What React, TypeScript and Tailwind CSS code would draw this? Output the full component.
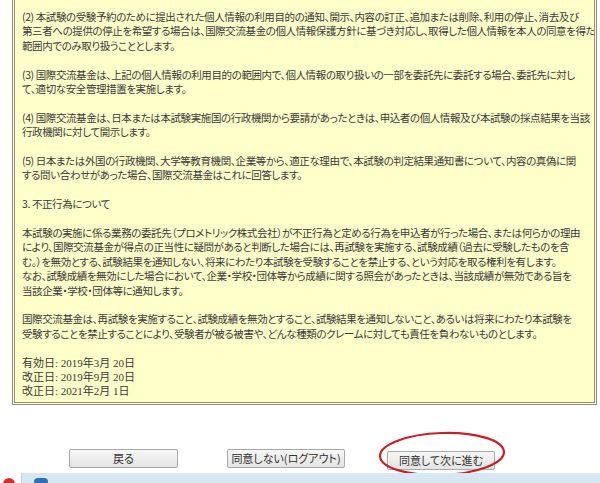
import React from "react";

// Terms text, split the way the original page wraps it
const PARAGRAPHS: string[][] = [
  [
    "(2) 本試験の受験予約のために提出された個人情報の利用目的の通知、開示、内容の訂正、追加または削除、利用の停止、消去及び",
    "第三者への提供の停止を希望する場合は、国際交流基金の個人情報保護方針に基づき対応し、取得した個人情報を本人の同意を得た",
    "範囲内でのみ取り扱うこととします。",
  ],
  [
    "(3) 国際交流基金は、上記の個人情報の利用目的の範囲内で、個人情報の取り扱いの一部を委託先に委託する場合、委託先に対し",
    "て、適切な安全管理措置を実施します。",
  ],
  [
    "(4) 国際交流基金は、日本または本試験実施国の行政機関から要請があったときは、申込者の個人情報及び本試験の採点結果を当該",
    "行政機関に対して開示します。",
  ],
  [
    "(5) 日本または外国の行政機関、大学等教育機関、企業等から、適正な理由で、本試験の判定結果通知書について、内容の真偽に関",
    "する問い合わせがあった場合、国際交流基金はこれに回答します。",
  ],
  ["3. 不正行為について"],
  [
    "本試験の実施に係る業務の委託先（プロメトリック株式会社）が不正行為と定める行為を申込者が行った場合、または何らかの理由",
    "により、国際交流基金が得点の正当性に疑問があると判断した場合には、再試験を実施する、試験成績（過去に受験したものを含",
    "む。）を無効とする、試験結果を通知しない、将来にわたり本試験を受験することを禁止する、という対応を取る権利を有します。",
    "なお、試験成績を無効にした場合において、企業・学校・団体等から成績に関する照会があったときは、当該成績が無効である旨を",
    "当該企業・学校・団体等に通知します。",
  ],
  [
    "国際交流基金は、再試験を実施すること、試験成績を無効とすること、試験結果を通知しないこと、あるいは将来にわたり本試験を",
    "受験することを禁止することにより、受験者が被る被害や、どんな種類のクレームに対しても責任を負わないものとします。",
  ],
];

const DATES = ["有効日: 2019年3月 20日", "改正日: 2019年9月 20日", "改正日: 2021年2月 1日"];

function Button({ label, className }: { label: string; className?: string }) {
  return (
    <button
      className={
        "h-[19px] border border-[#a8a8a8] rounded-[2px] bg-gradient-to-b from-[#f6f6f6] to-[#e4e4e4] text-[11px] text-[#333] [font-feature-settings:'palt'] " +
        (className ?? "")
      }
    >
      {label}
    </button>
  );
}

export default function App() {
  return (
    <div className="w-[600px] h-[483px] bg-white overflow-hidden flex flex-col font-['Noto_Sans_CJK_JP',sans-serif]">
      {/* terms panel, top is scrolled off */}
      <div className="ml-[12px] w-[585px] h-[405px] shrink-0 overflow-hidden border-[3px] border-double border-t-0 border-[#8f8f86] bg-[#ffffc9] pl-[7px] pt-[10px] text-[10.5px] leading-[14.4px] tracking-[-0.4px] text-[#3a3a3a] [font-feature-settings:'palt'] whitespace-nowrap">
        {PARAGRAPHS.map((lines, i) => (
          <p key={i} className="mb-[14.4px]">
            {lines.map((line, j) => (
              <span key={j} className="block">
                {line}
              </span>
            ))}
          </p>
        ))}
        <div className="font-['Liberation_Serif','Noto_Sans_CJK_JP',serif] text-[11px] leading-[14px] tracking-normal">
          {DATES.map((d) => (
            <div key={d}>{d}</div>
          ))}
        </div>
      </div>

      {/* action buttons */}
      <div className="flex items-center mt-[41px] pl-[69px]">
        <Button label="戻る" className="w-[109px]" />
        <Button label="同意しない(ログアウト)" className="w-[118px] ml-[49px]" />
        <div className="relative ml-[42px]">
          <Button label="同意して次に進む" className="w-[108px]" />
          <svg
            className="absolute left-[-9px] top-[-15px] pointer-events-none"
            width="130"
            height="46"
            viewBox="0 0 130 46"
          >
            <ellipse cx="64" cy="23" rx="62" ry="21" fill="none" stroke="#c8202a" strokeWidth="2.2" transform="rotate(-2 64 23)" />
          </svg>
        </div>
      </div>

      {/* taskbar strip */}
      <div className="mt-auto h-[10px] flex">
        <div className="w-[22px] relative border-r border-[#c8d4dc]">
          <div className="absolute left-[3px] top-[5px] w-[12px] h-[12px] rounded-full bg-[#d23030]" />
        </div>
        <div className="flex-1 bg-[#d7e7f1] relative">
          <div className="absolute left-[12px] top-[5px] w-[14px] h-[6px] rounded-t-[4px] bg-[#2f6fb5]" />
        </div>
      </div>
    </div>
  );
}
